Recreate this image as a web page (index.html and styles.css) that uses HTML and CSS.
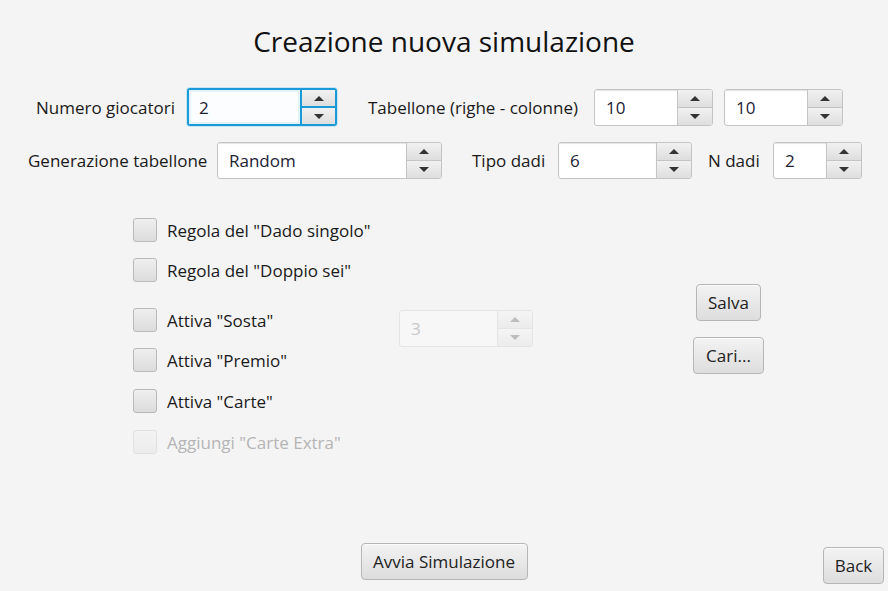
FILE: index.html
```html
<!DOCTYPE html>
<html lang="it">
<head>
<meta charset="utf-8">
<title>Creazione nuova simulazione</title>
<link rel="stylesheet" href="styles.css">
</head>
<body>
<div class="app">
  <h1 class="title">Creazione nuova simulazione</h1>

  <div class="row row1">
    <label class="lbl w-num">Numero giocatori</label>
    <div class="spinner focused w150">
      <div class="field">2</div>
      <div class="arrows"><span class="btn up"><i></i></span><span class="btn down"><i></i></span></div>
    </div>
    <label class="lbl w-tab">Tabellone (righe - colonne)</label>
    <div class="spinner w119">
      <div class="field">10</div>
      <div class="arrows"><span class="btn up"><i></i></span><span class="btn down"><i></i></span></div>
    </div>
    <div class="spinner w119 ml11">
      <div class="field">10</div>
      <div class="arrows"><span class="btn up"><i></i></span><span class="btn down"><i></i></span></div>
    </div>
  </div>

  <div class="row row2">
    <label class="lbl w-gen">Generazione tabellone</label>
    <div class="spinner w225">
      <div class="field">Random</div>
      <div class="arrows"><span class="btn up"><i></i></span><span class="btn down"><i></i></span></div>
    </div>
    <label class="lbl w-tipo">Tipo dadi</label>
    <div class="spinner w134">
      <div class="field">6</div>
      <div class="arrows"><span class="btn up"><i></i></span><span class="btn down"><i></i></span></div>
    </div>
    <label class="lbl w-n">N dadi</label>
    <div class="spinner w89">
      <div class="field">2</div>
      <div class="arrows"><span class="btn up"><i></i></span><span class="btn down"><i></i></span></div>
    </div>
  </div>

  <div class="middle">
    <div class="checks">
      <div class="check"><span class="box"></span><span class="ctext">Regola del "Dado singolo"</span></div>
      <div class="check g16"><span class="box"></span><span class="ctext">Regola del "Doppio sei"</span></div>
      <div class="check g26"><span class="box"></span><span class="ctext">Attiva "Sosta"</span></div>
      <div class="check g16"><span class="box"></span><span class="ctext">Attiva "Premio"</span></div>
      <div class="check g17"><span class="box"></span><span class="ctext">Attiva "Carte"</span></div>
      <div class="check g17 disabled"><span class="box"></span><span class="ctext">Aggiungi "Carte Extra"</span></div>
    </div>
    <div class="sosta">
      <div class="spinner w134 disabled">
        <div class="field">3</div>
        <div class="arrows"><span class="btn up"><i></i></span><span class="btn down"><i></i></span></div>
      </div>
    </div>
    <div class="actions">
      <button class="fxbtn salva">Salva</button>
      <button class="fxbtn cari">Cari...</button>
    </div>
  </div>

  <div class="bottom">
    <span></span>
    <button class="fxbtn avvia">Avvia Simulazione</button>
    <button class="fxbtn back">Back</button>
  </div>
</div>
</body>
</html>
```

FILE: styles.css
```css
* { box-sizing: border-box; }
html, body { margin: 0; padding: 0; background: #f4f4f4; }
body {
  font-family: "Open Sans", "Noto Sans", "Liberation Sans", sans-serif;
  color: #1a1a1a;
}
.app {
  width: 888px;
  height: 591px;
  display: flex;
  flex-direction: column;
  overflow: hidden;
}
.title {
  margin: 21px 0 0 0;
  height: 40px;
  line-height: 40px;
  text-align: center;
  font-weight: 400;
  font-size: 28px;
  color: #111;
}
.row {
  display: flex;
  align-items: center;
}
.row1 { margin-top: 27px; padding-left: 36px; }
.row2 { margin-top: 16px; padding-left: 28px; }

.lbl {
  font-size: 17px;
  color: #1a1a1a;
  white-space: nowrap;
}
.w-num { width: 151px; }
.w-tab { width: 226px; margin-left: 31px; }
.w-gen { width: 189px; }
.w-tipo { width: 86px; margin-left: 30px; }
.w-n { width: 65px; margin-left: 16px; }
.ml11 { margin-left: 11px; }

.spinner {
  display: flex;
  height: 37px;
  border: 1px solid #c4c4c4;
  border-radius: 3px;
  background: #fff;
  overflow: hidden;
}
.w150 { width: 150px; height: 38px; }
.w119 { width: 119px; }
.w225 { width: 225px; }
.w134 { width: 134px; }
.w89 { width: 89px; }

.spinner .field {
  flex: 1;
  padding-left: 11px;
  font-size: 17px;
  line-height: 35px;
  color: #1c2233;
  box-shadow: inset 0 1px 1px #e4e4e4;
}
.spinner .arrows {
  width: 35px;
  display: flex;
  flex-direction: column;
  border-left: 1px solid #c4c4c4;
}
.spinner .btn {
  flex: 1;
  display: flex;
  align-items: center;
  justify-content: center;
  background: linear-gradient(#f1f1f1, #dedede);
}
.spinner .btn.up { border-bottom: 1px solid #c4c4c4; }
.spinner .btn i {
  width: 0; height: 0;
  border-left: 5px solid transparent;
  border-right: 5px solid transparent;
}
.spinner .btn.up i { border-bottom: 5px solid #333; }
.spinner .btn.down i { border-top: 5px solid #333; }

.spinner.focused {
  border: 2px solid #1a9bd7;
  box-shadow: 0 0 0 1px #c6e6f5;
}
.spinner.focused .field {
  background: #fbfdfe;
  box-shadow: inset 0 0 0 2px #e2f3fb;
  padding-left: 10px;
}
.spinner.focused .arrows { border-left: 2px solid #1a9bd7; }
.spinner.focused .btn.up { border-bottom: 2px solid #1a9bd7; }

.spinner.disabled { border-color: #e4e4e4; background: #f7f7f7; }
.spinner.disabled .field { color: #c8c8c8; box-shadow: none; }
.spinner.disabled .arrows { border-left-color: #e4e4e4; }
.spinner.disabled .btn { background: linear-gradient(#f4f4f4, #ececec); }
.spinner.disabled .btn.up { border-bottom-color: #e4e4e4; }
.spinner.disabled .btn.up i { border-bottom-color: #bdbdbd; }
.spinner.disabled .btn.down i { border-top-color: #bdbdbd; }

.middle {
  display: flex;
  margin-top: 39px;
  height: 325px;
}
.checks {
  margin-left: 133px;
  width: 266px;
  display: flex;
  flex-direction: column;
}
.check {
  display: flex;
  align-items: center;
  height: 24px;
}
.g16 { margin-top: 16px; }
.g17 { margin-top: 17px; }
.g26 { margin-top: 26px; }
.box {
  width: 24px;
  height: 24px;
  border: 1px solid #b9b9b9;
  border-radius: 3px;
  background: linear-gradient(#efefef, #dcdcdc);
  flex: none;
}
.ctext {
  margin-left: 10px;
  font-size: 17px;
  color: #1a1a1a;
  white-space: nowrap;
}
.check.disabled .box { border-color: #e0e0e0; background: linear-gradient(#f3f3f3, #ececec); }
.check.disabled .ctext { color: #b4b4b4; }

.sosta { padding-top: 92px; }

.actions {
  margin-left: 160px;
  width: 71px;
  display: flex;
  flex-direction: column;
  align-items: center;
  padding-top: 66px;
}

.fxbtn {
  font-family: inherit;
  font-size: 17px;
  color: #222;
  height: 37px;
  padding: 0 8px;
  border: 1px solid #b6b6b6;
  border-radius: 4px;
  background: linear-gradient(#f3f3f3, #dddddd);
  box-shadow: inset 0 1px 0 #fbfbfb;
  white-space: nowrap;
}
.salva { width: 65px; }
.cari { width: 71px; margin-top: 16px; }

.bottom {
  display: grid;
  grid-template-columns: 1fr auto 1fr;
  align-items: start;
  margin-top: 0;
}
.avvia { width: 167px; }
.back { width: 61px; justify-self: end; margin-right: 4px; margin-top: 4px; padding: 0; }
```
